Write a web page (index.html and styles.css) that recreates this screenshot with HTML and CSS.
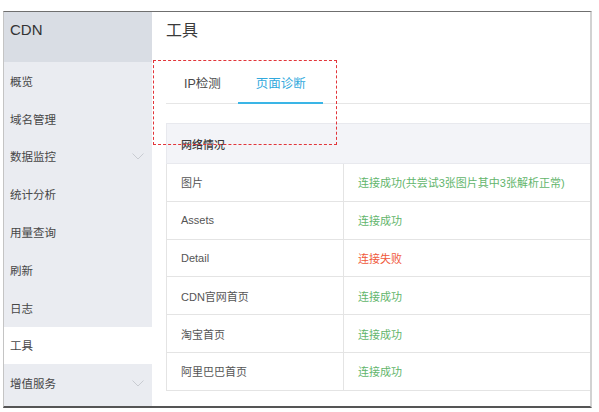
FILE: index.html
```html
<!DOCTYPE html>
<html lang="zh-CN">
<head>
<meta charset="utf-8">
<title>CDN 工具</title>
<link rel="stylesheet" href="styles.css">
</head>
<body>
<div class="frame">
  <aside class="sidebar">
    <div class="brand">CDN</div>
    <ul class="menu">
      <li class="menu-item">概览</li>
      <li class="menu-item">域名管理</li>
      <li class="menu-item">数据监控<svg class="chev" viewBox="0 0 12 7"><polyline points="0.5,0.5 6,6 11.5,0.5"/></svg></li>
      <li class="menu-item">统计分析</li>
      <li class="menu-item">用量查询</li>
      <li class="menu-item">刷新</li>
      <li class="menu-item">日志</li>
      <li class="menu-item active">工具</li>
      <li class="menu-item">增值服务<svg class="chev" viewBox="0 0 12 7"><polyline points="0.5,0.5 6,6 11.5,0.5"/></svg></li>
    </ul>
  </aside>
  <main class="main">
    <h1 class="title">工具</h1>
    <div class="tabs">
      <div class="tab">IP检测</div>
      <div class="tab current">页面诊断</div>
    </div>
    <table class="grid">
      <colgroup>
        <col class="col-name">
        <col class="col-state">
      </colgroup>
      <thead>
        <tr><th colspan="2">网络情况</th></tr>
      </thead>
      <tbody>
        <tr><td>图片</td><td class="ok">连接成功(共尝试3张图片其中3张解析正常)</td></tr>
        <tr><td>Assets</td><td class="ok">连接成功</td></tr>
        <tr><td>Detail</td><td class="fail">连接失败</td></tr>
        <tr><td>CDN官网首页</td><td class="ok">连接成功</td></tr>
        <tr><td>淘宝首页</td><td class="ok">连接成功</td></tr>
        <tr><td>阿里巴巴首页</td><td class="ok">连接成功</td></tr>
      </tbody>
    </table>
  </main>
  <div class="mark"></div>
</div>
</body>
</html>
```

FILE: styles.css
```css
* { box-sizing: border-box; }

html, body {
  margin: 0;
  padding: 0;
  background: #fff;
}

body {
  font-family: "Liberation Sans", "Noto Sans CJK SC", sans-serif;
  color: #444;
}

.frame {
  position: relative;
  margin: 11px 0 0 3px;
  width: 589px;
  height: 397px;
  border-top: 1px solid #6f6f6f;
  border-bottom: 2px solid #555;
  border-left: 1px solid #c4c4c4;
  border-right: 2px solid #d2d2d2;
  display: grid;
  grid-template-columns: 148px 1fr;
  overflow: hidden;
}

/* sidebar */
.sidebar {
  background: #eaecf1;
  display: flex;
  flex-direction: column;
}

.brand {
  height: 50px;
  background: #d9dde4;
  padding-left: 6px;
  font-size: 15px;
  line-height: 36px;
  color: #333;
}

.menu {
  list-style: none;
  margin: 0;
  padding: 0;
}

.menu-item {
  height: 37.8px;
  padding: 0 8px 0 6px;
  display: flex;
  align-items: center;
  justify-content: space-between;
  font-size: 11.5px;
  color: #474747;
}

.menu-item.active {
  background: #fff;
}

.chev {
  width: 12px;
  height: 7px;
  fill: none;
  stroke: #c9ccd2;
  stroke-width: 1;
}

/* main area */
.main {
  background: #fff;
  padding-left: 14px;
  min-width: 0;
}

.title {
  margin: 0;
  height: 37px;
  font-size: 16px;
  font-weight: normal;
  line-height: 38px;
  color: #3a3a3a;
}

.tabs {
  display: flex;
  height: 55px;
  padding-top: 17px;
  border-bottom: 1px solid #e6e6e6;
  margin-bottom: 19px;
}

.tab {
  padding: 0 17px 0 18px;
  font-size: 12.5px;
  line-height: 36px;
  color: #484848;
}

.tab.current {
  color: #32a9dd;
  padding: 0 17px 0 18px;
  border-bottom: 2px solid #3ab5e6;
  height: 38px;
}

.grid {
  width: calc(100% + 2px);
  border-collapse: collapse;
  font-size: 11px;
  table-layout: fixed;
}

.col-name { width: 177px; }

.grid th {
  height: 40px;
  background: #f3f4f8;
  border: 1px solid #e8e9ee;
  text-align: left;
  padding: 0 0 0 14px;
  font-weight: 500;
  color: #3a3a3a;
}

.grid td {
  height: 37.8px;
  border: 1px solid #e4e4e4;
  padding: 0 0 0 14px;
  color: #555;
  white-space: nowrap;
  overflow: hidden;
}

.grid td.ok { color: #62b56b; }
.grid td.fail { color: #f0583a; }

/* red dashed highlight over the tab bar */
.mark {
  position: absolute;
  left: 149px;
  top: 48px;
  width: 184px;
  height: 85px;
  border: 1.5px dashed #e2353a;
  pointer-events: none;
}
```
